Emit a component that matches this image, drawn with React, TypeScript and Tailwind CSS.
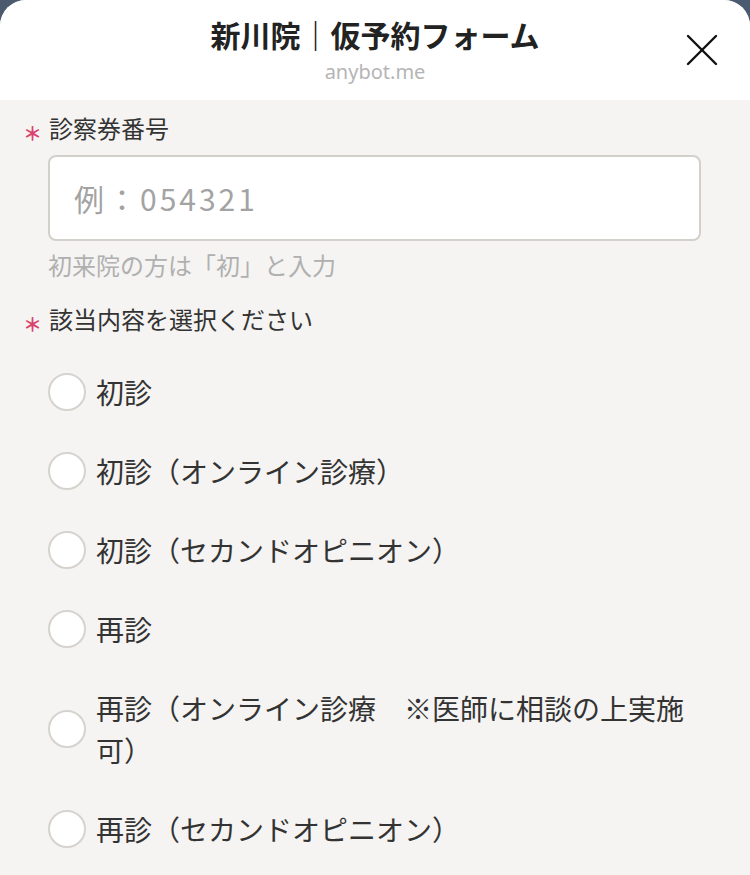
const OPTIONS = [
  '初診',
  '初診（オンライン診療）',
  '初診（セカンドオピニオン）',
  '再診',
  '再診（オンライン診療　※医師に相談の上実施可）',
  '再診（セカンドオピニオン）',
];

function Label({ text, className = '' }: { text: string; className?: string }) {
  return (
    <div className={`flex h-[34px] items-center ${className}`}>
      <span className="w-[49px] shrink-0 pl-[23px] text-[19px] font-bold leading-[19px] text-[#d9426d] translate-y-[4px]">＊</span>
      <span className="text-[24px] leading-[34px]">{text}</span>
    </div>
  );
}

export default function App() {
  return (
    <div className="min-h-screen bg-[#4b5a6e] font-['Noto_Sans_CJK_JP','Noto_Sans',sans-serif] text-[#333]">
      <div className="min-h-[875px] overflow-hidden rounded-t-[26px] bg-[#f5f4f2]">
        <header className="relative flex h-[100px] flex-col items-center bg-white pt-[12px]">
          <h1 className="text-[30px] font-bold leading-[44px] text-[#222]">新川院｜仮予約フォーム</h1>
          <p className="mt-[2px] font-['Noto_Sans',sans-serif] text-[20px] leading-[28px] text-[#b5b5b5]">anybot.me</p>
          <button className="absolute right-[32px] top-[34px] h-[32px] w-[32px]" aria-label="close">
            <svg viewBox="0 0 32 32" className="h-full w-full" stroke="#111" strokeWidth="2.4" strokeLinecap="round">
              <line x1="2" y1="2" x2="30" y2="30" />
              <line x1="30" y1="2" x2="2" y2="30" />
            </svg>
          </button>
        </header>

        <main className="pt-[11px] pr-[49px]">
          <Label text="診察券番号" />
          <div className="ml-[48px] mt-[10px] flex h-[86px] items-center rounded-[8px] border-2 border-[#d3d0cc] bg-white pl-[24px]">
            <span className="text-[30px] tracking-[3px] text-[#a3a3a3]">例：054321</span>
          </div>
          <p className="ml-[48px] mt-[7px] text-[24px] leading-[34px] text-[#b0b0b0]">初来院の方は「初」と入力</p>

          <Label text="該当内容を選択ください" className="mt-[20px]" />

          <div className="ml-[48px] mt-[35px] flex flex-col gap-[37px]">
            {OPTIONS.map((o) => (
              <label key={o} className="flex items-center gap-[10px]">
                <span className="h-[38px] w-[38px] shrink-0 rounded-full border-2 border-[#d6d3cf] bg-white" />
                <span className="text-[28px] leading-[42px] text-[#333]">{o}</span>
              </label>
            ))}
          </div>
        </main>
      </div>
    </div>
  );
}
